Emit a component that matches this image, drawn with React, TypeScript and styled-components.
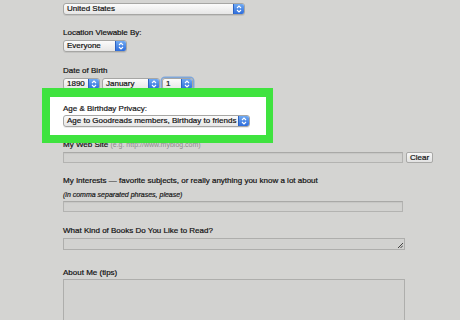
import React from "react";
import styled, { createGlobalStyle } from "styled-components";

const Global = createGlobalStyle`
  html, body { margin: 0; padding: 0; }
  body {
    background: #d4d4d2;
    font-family: "Liberation Sans", Arial, sans-serif;
    width: 460px;
    height: 320px;
    overflow: hidden;
  }
`;

const Page = styled.div`
  height: 320px;
  overflow: hidden;
  box-sizing: border-box;
  padding: 3px 0 0 63px;
  display: flex;
  flex-direction: column;
  align-items: flex-start;
  -webkit-text-stroke: 0.2px currentColor;
`;

const Label = styled.div<{ $mt: number }>`
  flex-shrink: 0;
  margin-top: ${(p) => p.$mt}px;
  height: 10px;
  line-height: 10px;
  font-size: 8px;
  color: #111;
  white-space: nowrap;
`;

const Hint = styled.span`
  color: #8c8c8a;
  font-size: 7px;
  -webkit-text-stroke: 0;
`;

const Note = styled.div`
  flex-shrink: 0;
  margin-top: 4px;
  height: 10px;
  line-height: 10px;
  font-size: 7px;
  font-style: italic;
  color: #1a1a1a;
  white-space: nowrap;
`;

const SelectBox = styled.div<{ $w: number; $mt?: number; $focus?: boolean }>`
  flex-shrink: 0;
  margin-top: ${(p) => p.$mt ?? 0}px;
  width: ${(p) => p.$w}px;
  height: 12px;
  box-sizing: border-box;
  display: flex;
  align-items: stretch;
  border: 1px solid #a6a6a4;
  border-radius: 3px;
  background: linear-gradient(#fbfbfb, #e6e6e6);
  box-shadow: ${(p) => (p.$focus ? "0 0 0 1.5px #7fa6d8" : "0 1px 0 rgba(0,0,0,0.08)")};
  font-size: 8px;
  color: #111;
  overflow: hidden;
`;

const SelectText = styled.span`
  flex: 1;
  padding-left: 3px;
  line-height: 10px;
  white-space: nowrap;
  overflow: hidden;
`;

const Stepper = styled.span`
  width: 10px;
  display: flex;
  align-items: center;
  justify-content: center;
  background: linear-gradient(#6fa9f2, #2d6cdb);
  border-left: 1px solid #2c62c2;
`;

const Arrows = () => (
  <svg width="6" height="8" viewBox="0 0 6 8">
    <path d="M1 3 L3 1 L5 3 M1 5 L3 7 L5 5" fill="none" stroke="#fff" strokeWidth="1.1" />
  </svg>
);

const Select = ({ w, mt, focus, children }: { w: number; mt?: number; focus?: boolean; children: React.ReactNode }) => (
  <SelectBox $w={w} $mt={mt} $focus={focus}>
    <SelectText>{children}</SelectText>
    <Stepper>
      <Arrows />
    </Stepper>
  </SelectBox>
);

const Row = styled.div<{ $mt: number; $gap: number }>`
  flex-shrink: 0;
  margin-top: ${(p) => p.$mt}px;
  display: flex;
  align-items: center;
  gap: ${(p) => p.$gap}px;
`;

const Highlight = styled.div`
  flex-shrink: 0;
  position: relative;
  z-index: 1;
  margin: -2px 0 0 -21px;
  width: 231px;
  box-sizing: border-box;
  border-style: solid;
  border-color: #3fe33f;
  border-width: 9px 7px 8px 8px;
  background: #ffffff;
  padding: 7px 0 8px 13px;
`;

const InnerLabel = styled.div`
  height: 10px;
  line-height: 10px;
  font-size: 8px;
  color: #151515;
  white-space: nowrap;
`;

const TextInput = styled.div<{ $w: number; $mt?: number }>`
  flex-shrink: 0;
  margin-top: ${(p) => p.$mt ?? 0}px;
  width: ${(p) => p.$w}px;
  height: 11px;
  box-sizing: border-box;
  border: 1px solid #b3b3b1;
  border-top-color: #a9a9a7;
  background: #d2d2d0;
  box-shadow: inset 0 1px 1px rgba(0, 0, 0, 0.06);
`;

const ClearButton = styled.div`
  width: 27px;
  height: 11px;
  box-sizing: border-box;
  border: 1px solid #a8a8a6;
  border-radius: 2px;
  background: linear-gradient(#f6f6f6, #e2e2e2);
  font-size: 8px;
  line-height: 9px;
  text-align: center;
  color: #111;
`;

const TextArea = styled.div<{ $h: number; $mt: number }>`
  flex-shrink: 0;
  position: relative;
  margin-top: ${(p) => p.$mt}px;
  width: 342px;
  height: ${(p) => p.$h}px;
  box-sizing: border-box;
  border: 1px solid #aeaeac;
  background: #d2d2d0;
`;

const Grip = styled.svg`
  position: absolute;
  right: 1px;
  bottom: 1px;
`;

export default function App() {
  return (
    <>
      <Global />
      <Page>
        <Select w={182}>United States</Select>

        <Label $mt={13}>Location Viewable By:</Label>
        <Select w={64} mt={2}>Everyone</Select>

        <Label $mt={14}>Date of Birth</Label>
        <Row $mt={2} $gap={2}>
          <Select w={37}>1890</Select>
          <Select w={58}>January</Select>
          <Select w={31} focus>1</Select>
        </Row>

        <Highlight>
          <InnerLabel>Age &amp; Birthday Privacy:</InnerLabel>
          <Select w={187} mt={1}>Age to Goodreads members, Birthday to friends</Select>
        </Highlight>

        <Label $mt={-3}>
          My Web Site <Hint>(e.g. http://www.mybiog.com)</Hint>
        </Label>
        <Row $mt={2} $gap={3}>
          <TextInput $w={340} />
          <ClearButton>Clear</ClearButton>
        </Row>

        <Label $mt={13}>My Interests — favorite subjects, or really anything you know a lot about</Label>
        <Note>(in comma separated phrases, please)</Note>
        <TextInput $w={340} $mt={1} />

        <Label $mt={14}>What Kind of Books Do You Like to Read?</Label>
        <TextArea $h={12} $mt={2}>
          <Grip width="6" height="6" viewBox="0 0 6 6">
            <path d="M1 6 L6 1 M3.5 6 L6 3.5" stroke="#333" strokeWidth="0.9" />
          </Grip>
        </TextArea>

        <Label $mt={18}>About Me (tips)</Label>
        <TextArea $h={60} $mt={1} />
      </Page>
    </>
  );
}
